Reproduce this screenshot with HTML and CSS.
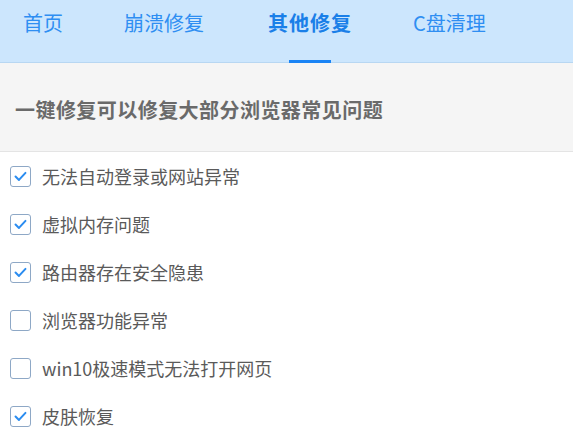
FILE: index.html
```html
<!DOCTYPE html>
<html lang="zh">
<head>
<meta charset="utf-8">
<link rel="stylesheet" href="styles.css">
</head>
<body>
<nav class="tabs">
  <div class="tab">首页</div>
  <div class="tab">崩溃修复</div>
  <div class="tab active">其他修复</div>
  <div class="tab">C盘清理</div>
</nav>
<section class="intro">一键修复可以修复大部分浏览器常见问题</section>
<ul class="list">
  <li class="item"><span class="box checked"><svg viewBox="0 0 21 21"><path d="M5 10.5l3.8 3.8L16 6.5"/></svg></span>无法自动登录或网站异常</li>
  <li class="item"><span class="box checked"><svg viewBox="0 0 21 21"><path d="M5 10.5l3.8 3.8L16 6.5"/></svg></span>虚拟内存问题</li>
  <li class="item"><span class="box checked"><svg viewBox="0 0 21 21"><path d="M5 10.5l3.8 3.8L16 6.5"/></svg></span>路由器存在安全隐患</li>
  <li class="item"><span class="box"></span>浏览器功能异常</li>
  <li class="item"><span class="box"></span>win10极速模式无法打开网页</li>
  <li class="item"><span class="box checked"><svg viewBox="0 0 21 21"><path d="M5 10.5l3.8 3.8L16 6.5"/></svg></span>皮肤恢复</li>
</ul>
</body>
</html>
```
FILE: styles.css
```css
* { box-sizing: border-box; }
html, body { margin: 0; padding: 0; background: #fff; }
body {
  font-family: "Noto Sans CJK SC", "Noto Sans", sans-serif;
  overflow: hidden;
}
.tabs {
  display: flex;
  gap: 61px;
  height: 63px;
  padding-left: 23px;
  background: #cce6fd;
  border-bottom: 1px solid #b8d7f2;
}
.tab {
  position: relative;
  font-size: 20px;
  line-height: 28px;
  padding-top: 9px;
  color: #2e8ef2;
}
.tab.active {
  margin-left: 3px;
  color: #1a7fe8;
  font-weight: bold;
  letter-spacing: 1px;
}
.tab.active::after {
  content: "";
  position: absolute;
  left: 50%;
  margin-left: -21px;
  bottom: -1px;
  width: 42px;
  height: 3px;
  background: #1a84f5;
}
.intro {
  height: 89px;
  padding: 33px 0 0 15px;
  font-size: 20px;
  line-height: 28px;
  font-weight: bold;
  letter-spacing: 0.45px;
  color: #6a6a6a;
  background: #f5f5f5;
  border-bottom: 1px solid #e4e4e4;
}
.list {
  list-style: none;
  margin: 0;
  padding: 0;
}
.item {
  display: flex;
  align-items: center;
  gap: 11px;
  height: 48px;
  padding-left: 10px;
  font-size: 18px;
  color: #5a5a5a;
}
.box {
  width: 21px;
  height: 21px;
  border: 1.5px solid #8ea8c6;
  border-radius: 3px;
  background: #fff;
  flex: none;
  display: flex;
}
.box svg {
  width: 100%;
  height: 100%;
}
.box path {
  fill: none;
  stroke: #2a8cf0;
  stroke-width: 2.2;
  stroke-linecap: round;
  stroke-linejoin: round;
}
```
